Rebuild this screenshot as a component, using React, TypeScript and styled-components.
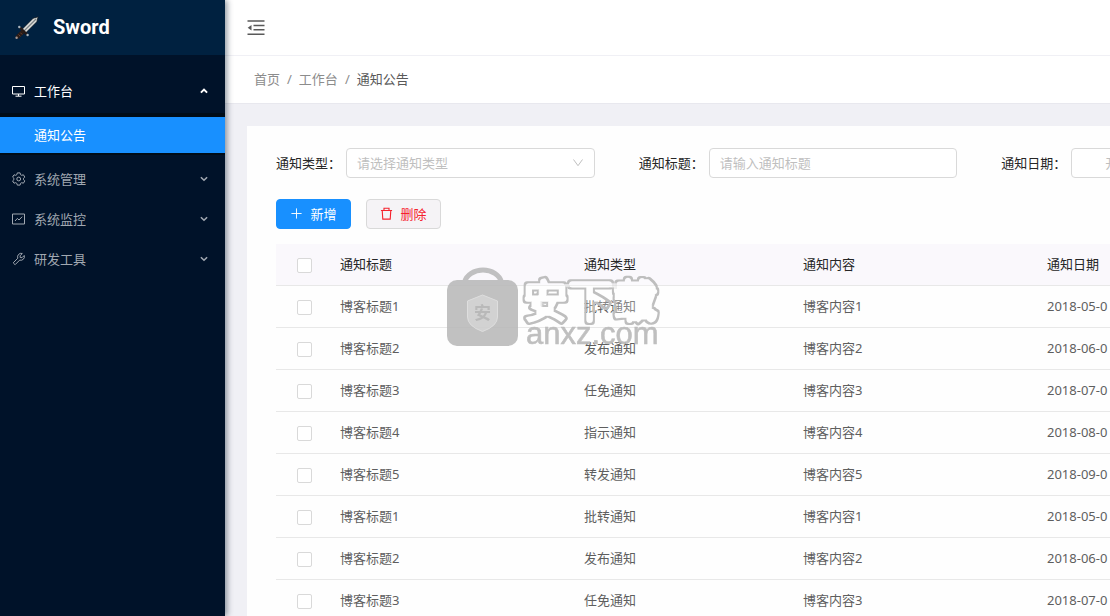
import React from "react";
import styled, { createGlobalStyle } from "styled-components";

const Global = createGlobalStyle`
  * { box-sizing: border-box; }
  html, body, #root { height: 100%; }
  body {
    margin: 0;
    overflow: hidden;
    background: #f0f0f5;
    color: #5e5e5e;
    font: 13px/20px "Noto Sans", "Noto Sans CJK SC", sans-serif;
  }
  button, input, select { font: inherit; }
`;

const Shell = styled.div`
  display: flex;
  min-height: 100vh;
`;

const Sidebar = styled.aside`
  position: relative;
  z-index: 2;
  flex: 0 0 225px;
  background: #001229;
  box-shadow: 2px 0 6px rgba(0, 21, 41, 0.45);
`;

const Brand = styled.a`
  display: flex;
  align-items: center;
  gap: 14px;
  height: 55px;
  padding: 0 14px 1px;
  background: #002140;
  color: #fff;
  font: bold 20px/24px Roboto, sans-serif;
  text-decoration: none;
`;

const Menu = styled.nav`
  padding-top: 14px;
`;

const MenuButton = styled.button<{ $open?: boolean }>`
  display: flex;
  align-items: center;
  width: 100%;
  height: ${(p) => (p.$open ? 44 : 40)}px;
  padding: 0 16px 0 12px;
  border: 0;
  background: none;
  color: ${(p) => (p.$open ? "#fff" : "#a1a8b1")};
  text-align: left;
  cursor: pointer;
`;

const MenuLabel = styled.span`
  flex: 1;
  padding-left: 8px;
`;

const SubMenu = styled.div`
  margin-bottom: 4px;
  padding: 4px 0 2px;
  background: #000c17;
`;

const SubLink = styled.a`
  display: block;
  padding: 8px 34px;
  background: #1890ff;
  color: #fff;
  text-decoration: none;
`;

const Main = styled.main`
  flex: 1;
  min-width: 0;
  height: 100vh;
  overflow: hidden;
`;

const TopBar = styled.header`
  display: flex;
  align-items: center;
  height: 55px;
  padding-left: 22px;
  background: #fff;
`;

const IconButton = styled.button`
  display: flex;
  padding: 0;
  border: 0;
  background: none;
  color: #595959;
  cursor: pointer;
`;

const Crumbs = styled.nav`
  display: flex;
  align-items: center;
  gap: 7px;
  height: 49px;
  padding: 0 29px 2px;
  border-top: 1px solid #f0f0f5;
  border-bottom: 1px solid #e8e8ee;
  background: #fff;
  color: #8c8c8c;
`;

const Crumb = styled.a<{ $current?: boolean }>`
  color: ${(p) => (p.$current ? "#595959" : "#8c8c8c")};
  text-decoration: none;
`;

const Panel = styled.section`
  min-width: 1102px;
  margin: 22px 0 0 22px;
  padding: 22px 29px;
  background: #fefefe;
`;

const Filters = styled.form`
  display: grid;
  grid-template-columns: repeat(3, 1fr);
  gap: 44px;
`;

const Field = styled.div`
  display: flex;
  align-items: center;
`;

const FieldLabel = styled.label`
  flex: 0 0 70px;
  color: #262626;
`;

const Control = styled.div`
  position: relative;
  flex: 1;
  display: flex;
`;

const TextInput = styled.input<{ $indent?: number }>`
  width: 100%;
  height: 30px;
  padding: 0 ${(p) => p.$indent ?? 10}px;
  border: 1px solid #d9d9d9;
  border-radius: 4px;
  background: #fff;
  color: #595959;
  &::placeholder { color: #bfbfbf; opacity: 1; }
`;

const Select = styled.select`
  width: 100%;
  height: 30px;
  padding: 0 10px 1px;
  appearance: none;
  border: 1px solid #d9d9d9;
  border-radius: 4px;
  background: #fff;
  color: #bfbfbf;
`;

const SelectArrow = styled.svg`
  position: absolute;
  right: 11px;
  top: 9px;
  pointer-events: none;
`;

const Actions = styled.div`
  display: flex;
  gap: 15px;
  padding: 21px 0 15px;
`;

const Button = styled.button<{ $primary?: boolean }>`
  display: flex;
  align-items: center;
  justify-content: center;
  gap: 7px;
  width: 75px;
  height: 30px;
  padding: 0 0 1px;
  border: 1px solid ${(p) => (p.$primary ? "#1890ff" : "#d9d9d9")};
  border-radius: 4px;
  background: ${(p) => (p.$primary ? "#1890ff" : "#f5f3f6")};
  color: ${(p) => (p.$primary ? "#fff" : "#f5222d")};
  cursor: pointer;
`;

const Table = styled.table`
  width: 100%;
  table-layout: fixed;
  border-collapse: separate;
  border-spacing: 0;
`;

const Col = styled.col<{ $w?: number }>`
  width: ${(p) => (p.$w ? `${p.$w}px` : "auto")};
`;

const Th = styled.th`
  height: 42px;
  padding: 0 7px 2px;
  border-bottom: 1px solid #e8e8e8;
  background: #faf8fc;
  color: #262626;
  font-weight: 400;
  text-align: left;
`;

const Td = styled.td`
  height: 42px;
  padding: 0 7px 2px;
  border-bottom: 1px solid #e8e8e8;
  white-space: nowrap;
`;

const Check = styled.input`
  display: block;
  width: 15px;
  height: 15px;
  margin: 4px auto 0;
  appearance: none;
  border: 1px solid #d9d9d9;
  border-radius: 2px;
  background: #fff;
`;

const Watermark = styled.svg`
  position: absolute;
  left: 440px;
  top: 260px;
  z-index: 3;
  pointer-events: none;
`;

const Stroke = ({ size, children, w = 1, box = 14 }: { size: number; children: React.ReactNode; w?: number; box?: number }) => (
  <svg width={size} height={size} viewBox={`0 0 ${box} ${box}`} fill="none" stroke="currentColor" strokeWidth={w} aria-hidden="true">
    {children}
  </svg>
);

const MonitorIcon = () => (
  <Stroke size={14}>
    <path d="M.5 2.500h12v7.500H.500zM6.500 10v2M3.500 12.200h6" />
  </Stroke>
);

const GearIcon = () => (
  <Stroke size={14}>
    <circle cx="6.700" cy="7" r="1.900" />
    <path strokeLinejoin="round" d="M5.300.9h2.800l.4 1.700 1.200.7 1.700-.5 1.400 2.300-1.300 1.200v1.400l1.300 1.200-1.400 2.300-1.700-.5-1.200.7-.4 1.700H5.300l-.4-1.700-1.200-.7-1.700.5L.6 8.900l1.300-1.200V6.300L.6 5.100 2 2.800l1.700.5 1.200-.7z" />
  </Stroke>
);

const ChartIcon = () => (
  <Stroke size={14}>
    <path d="M.5 2h12v10H.500zM3 9l2.400-2.600L7 8l3.200-3.300" />
  </Stroke>
);

const WrenchIcon = () => (
  <Stroke size={14}>
    <path strokeLinejoin="round" d="M10.300 1.500a3.600 3.600 0 0 0-4.500 4.700L1.200 10.800l1.900 1.900 4.600-4.600a3.600 3.600 0 0 0 4.500-4.600L10 5.700 8.200 5.500 8.100 3.700z" />
  </Stroke>
);

const Chevron = ({ up }: { up?: boolean }) => (
  <Stroke size={10} box={10} w={up ? 2 : 1.6}>
    <path d={up ? "M1.900 6.600 5 3.600l3.100 3" : "M1.900 3.200 5 6.200l3.100-3"} />
  </Stroke>
);

const SwordIcon = () => (
  <svg width="25" height="25" viewBox="0 0 25 25" aria-hidden="true">
    <path d="M24.200 1.800 22.800 6.800 11.300 18.300 7.700 14.700 19.200 3.200z" fill="#dedfdb" stroke="#0b1520" strokeWidth=".8" />
    <path d="M22.300 3.700 10 16" stroke="#7b8184" strokeWidth="1.300" />
    <path d="M6 12.500 13.300 19.800" stroke="#241a17" strokeWidth="2.400" />
    <path d="M9.300 16.300 2.800 22.600" stroke="#2a1c17" strokeWidth="4" />
    <path d="M6.400 17.700l1.800 1.800M4.500 19.500l1.800 1.800" stroke="#7a4a38" strokeWidth=".8" />
    <circle cx="5.300" cy="12" r="1.200" fill="#a9b4bd" />
    <circle cx="13.600" cy="20" r="1.200" fill="#a9b4bd" />
    <circle cx="2.600" cy="22.800" r="1.200" fill="#a99a94" />
  </svg>
);

const FoldIcon = () => (
  <svg width="18" height="16" viewBox="0 0 18 16" aria-hidden="true">
    <path d="M.5 1h17M6.500 5.500h11M6.500 9.800h11M.5 14.300h17" stroke="currentColor" strokeWidth="1.500" />
    <path d="M4.500 5v5.400L.7 7.700z" fill="currentColor" />
  </svg>
);

const menu = [
  { label: "系统管理", Icon: GearIcon },
  { label: "系统监控", Icon: ChartIcon },
  { label: "研发工具", Icon: WrenchIcon },
];

const kinds = ["批转通知", "发布通知", "任免通知", "指示通知", "转发通知"];
const rows = Array.from({ length: 8 }, (_, i) => {
  const n = (i % 5) + 1;
  return { n, kind: kinds[n - 1], date: `2018-0${n + 4}-0` };
});

export default function App() {
  return (
    <>
      <Global />
      <Shell>
        <Sidebar>
          <Brand href="#">
            <SwordIcon />
            Sword
          </Brand>
          <Menu>
            <MenuButton $open aria-expanded="true">
              <MonitorIcon />
              <MenuLabel>工作台</MenuLabel>
              <Chevron up />
            </MenuButton>
            <SubMenu>
              <SubLink href="#notice">通知公告</SubLink>
            </SubMenu>
            {menu.map(({ label, Icon }) => (
              <MenuButton key={label} aria-expanded="false">
                <Icon />
                <MenuLabel>{label}</MenuLabel>
                <Chevron />
              </MenuButton>
            ))}
          </Menu>
        </Sidebar>
        <Main>
          <TopBar>
            <IconButton aria-label="收起菜单">
              <FoldIcon />
            </IconButton>
          </TopBar>
          <Crumbs>
            <Crumb href="#">首页</Crumb>
            <span>/</span>
            <Crumb href="#desk">工作台</Crumb>
            <span>/</span>
            <Crumb href="#notice" $current>通知公告</Crumb>
          </Crumbs>
          <Panel>
            <Filters>
              <Field>
                <FieldLabel htmlFor="kind">通知类型：</FieldLabel>
                <Control>
                  <Select id="kind" defaultValue="">
                    <option value="">请选择通知类型</option>
                    {kinds.map((k) => <option key={k}>{k}</option>)}
                  </Select>
                  <SelectArrow width="12" height="12" viewBox="0 0 12 12" fill="none" stroke="#bfbfbf">
                    <path d="M1.500 2.500 6 8.700l4.500-6.200" />
                  </SelectArrow>
                </Control>
              </Field>
              <Field>
                <FieldLabel htmlFor="title">通知标题：</FieldLabel>
                <Control><TextInput id="title" placeholder="请输入通知标题" /></Control>
              </Field>
              <Field>
                <FieldLabel htmlFor="date">通知日期：</FieldLabel>
                <Control><TextInput id="date" $indent={33} placeholder="开始日期" /></Control>
              </Field>
            </Filters>
            <Actions>
              <Button $primary>
                <Stroke size={13}><path d="M7 1.500v11M1.500 7h11" /></Stroke>
                新增
              </Button>
              <Button>
                <Stroke size={13} w={1.2}>
                  <path d="M1 3.800h12M4.300 3.600V1.300h5.400v2.300M2.400 4l.6 9h8l.6-9" />
                </Stroke>
                删除
              </Button>
            </Actions>
            <Table>
              <colgroup>
                <Col $w={57} />
                <Col $w={244} />
                <Col $w={219} />
                <Col $w={244} />
                <Col />
              </colgroup>
              <thead>
                <tr>
                  <Th><Check type="checkbox" aria-label="全选" /></Th>
                  <Th>通知标题</Th>
                  <Th>通知类型</Th>
                  <Th>通知内容</Th>
                  <Th>通知日期</Th>
                </tr>
              </thead>
              <tbody>
                {rows.map((r, i) => (
                  <tr key={i}>
                    <Td><Check type="checkbox" aria-label={`选择博客标题${r.n}`} /></Td>
                    <Td>博客标题{r.n}</Td>
                    <Td>{r.kind}</Td>
                    <Td>博客内容{r.n}</Td>
                    <Td>{r.date}</Td>
                  </tr>
                ))}
              </tbody>
            </Table>
          </Panel>
        </Main>
      </Shell>
      <Watermark width="226" height="94" viewBox="0 0 226 94" aria-hidden="true">
        <defs>
          <filter id="outline" x="-5%" y="-20%" width="110%" height="140%" colorInterpolationFilters="sRGB">
            <feMorphology in="SourceAlpha" operator="erode" radius="2" result="inner" />
            <feComposite in="SourceGraphic" in2="inner" operator="out" result="ring" />
            <feFlood floodColor="#fff" floodOpacity=".25" />
            <feComposite in2="inner" operator="in" result="body" />
            <feMerge>
              <feMergeNode in="body" />
              <feMergeNode in="ring" />
            </feMerge>
          </filter>
        </defs>
        <g opacity=".88">
          <path d="M24.500 22a19 15.500 0 0 1 37 0" fill="none" stroke="#b9b9b9" strokeWidth="5" />
          <rect x="7" y="20" width="71" height="66" rx="10" fill="#b9b9b9" />
          <path d="M42.500 35 57.500 41v16q0 9-15 14.500Q27.500 66 27.500 57V41z" fill="#cdcdcd" stroke="#dadada" />
          <text x="42.500" y="59" textAnchor="middle" fontSize="17" fontWeight="700" fill="#b0b0b0" fontFamily="Noto Sans CJK SC, sans-serif">安</text>
        </g>
        <text x="83" y="58" filter="url(#outline)" fontFamily="Noto Sans CJK SC, sans-serif" fontSize="45" fontWeight="400" strokeLinejoin="round" fill="#bebebe" stroke="#bebebe" strokeWidth="7">安下载</text>
        <text x="86" y="84" fontFamily="Liberation Sans, sans-serif" fontSize="31" fill="#b9b9b9" stroke="#b9b9b9" strokeWidth=".6" opacity=".9">anxz.com</text>
      </Watermark>
    </>
  );
}
